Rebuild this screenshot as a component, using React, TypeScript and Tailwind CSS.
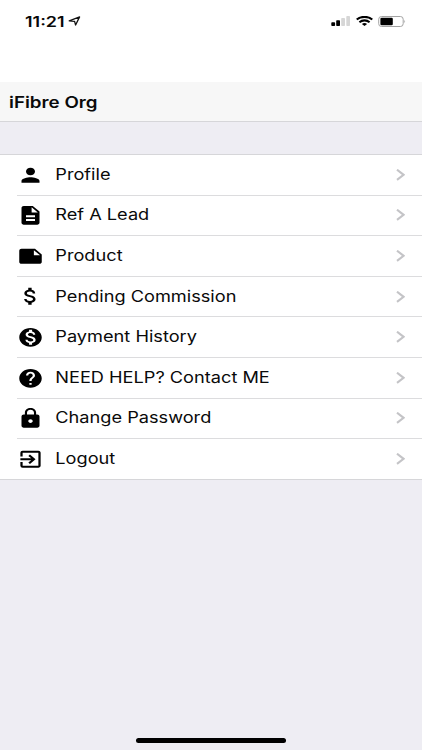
import type { IconType } from 'react-icons';
import {
  MdAttachMoney,
  MdDescription,
  MdExitToApp,
  MdHelp,
  MdLock,
  MdMonetizationOn,
  MdNote,
  MdPerson,
} from 'react-icons/md';

interface MenuItem {
  label: string;
  icon: IconType;
}

const menuItems: MenuItem[] = [
  { label: 'Profile', icon: MdPerson },
  { label: 'Ref A Lead', icon: MdDescription },
  { label: 'Product', icon: MdNote },
  { label: 'Pending Commission', icon: MdAttachMoney },
  { label: 'Payment History', icon: MdMonetizationOn },
  { label: 'NEED HELP? Contact ME', icon: MdHelp },
  { label: 'Change Password', icon: MdLock },
  { label: 'Logout', icon: MdExitToApp },
];

function StatusBar() {
  return (
    <div className="flex h-[82px] items-start justify-between bg-white pl-[25px] pr-4 pt-[11px]">
      <div className="flex h-5 items-center">
        <span className="w-[43px] origin-left translate-y-[0.5px] scale-x-[1.28] whitespace-nowrap text-[14px] font-semibold leading-5">
          11:21
        </span>
        <svg className="h-[10px] w-[13px]" viewBox="0 0 13 10" fill="none" stroke="#111" strokeWidth="1.3" strokeLinejoin="round">
          <path d="M11.6 0.9 L7.6 9 L6.6 5.3 L1.2 4.8 Z" />
        </svg>
      </div>
      <div className="flex h-5 items-center">
        <svg className="h-[10px] w-[19px]" viewBox="0 0 19 10">
          <rect x="0.3" y="6.2" width="3.8" height="3.8" rx="0.8" />
          <rect x="5.2" y="4.3" width="3.8" height="5.7" rx="0.8" />
          <rect x="10.2" y="2" width="3.8" height="8" rx="0.8" fill="#d6d6d6" />
          <rect x="15.3" y="0" width="3.7" height="10" rx="0.8" fill="#d6d6d6" />
        </svg>
        <svg className="ml-[6px] h-[10px] w-[17px]" viewBox="0 0 17 10" fill="none" stroke="#000" strokeWidth="2.1">
          <path d="M0.7 3.5 C5 0 12 0 16.3 3.5" />
          <path d="M3.4 6.2 C6.3 3.8 10.7 3.8 13.6 6.2" />
          <path d="M5.9 7.9 Q8.5 6.2 11.1 7.9 L8.5 10 Z" fill="#000" stroke="none" />
        </svg>
        <svg className="ml-[5px] h-[11px] w-[28px]" viewBox="0 0 28 11">
          <rect x="0.7" y="0.5" width="24.5" height="10" rx="2.8" fill="none" stroke="#a3a3a3" />
          <rect x="2.4" y="1.8" width="12.4" height="7.4" rx="1.2" />
          <path d="M26.3 3.7 Q28 5.5 26.3 7.3 Z" fill="#a3a3a3" />
        </svg>
      </div>
    </div>
  );
}

function MenuRow({ item, last }: { item: MenuItem; last: boolean }) {
  const Icon = item.icon;

  return (
    <li className="flex h-[40.6px] items-stretch pl-[17px]">
      <div className={`flex flex-1 items-center ${last ? '' : 'border-b border-[#dcdcde]'}`}>
        <Icon preserveAspectRatio="none" className="h-[22.5px] w-[27px] text-black" />
        <span className="ml-[11px] origin-left translate-x-[0.3px] translate-y-[0.4px] scale-x-[1.173] whitespace-nowrap text-[15.5px] leading-5">
          {item.label}
        </span>
        <svg
          className="ml-auto mr-[17px] h-3 w-[9px]"
          viewBox="0 0 9 12"
          fill="none"
          stroke="#c4c4c7"
          strokeWidth="2.1"
        >
          <path d="M1 0.7 L7.6 5.8 L1 10.9" />
        </svg>
      </div>
    </li>
  );
}

export default function App() {
  return (
    <div className="flex h-[750px] w-[422px] flex-col overflow-hidden bg-[#eeedf3] font-['Inter',sans-serif] text-[#0a0a0a]">
      <StatusBar />
      <header className="flex h-10 items-center border-b border-[#d6d6d9] bg-[#f7f7f7] pl-[9px]">
        <h1 className="origin-left translate-y-[0.5px] scale-x-[1.21] whitespace-nowrap text-[15.5px] font-semibold leading-5">
          iFibre Org
        </h1>
      </header>
      <ul className="mt-8 h-[326px] border-y border-[#d6d6d9] bg-white">
        {menuItems.map((item, index) => (
          <MenuRow key={item.label} item={item} last={index === menuItems.length - 1} />
        ))}
      </ul>
      <div className="mx-auto mb-[7.5px] mt-auto h-[5px] w-[150px] rounded-full bg-black" />
    </div>
  );
}
